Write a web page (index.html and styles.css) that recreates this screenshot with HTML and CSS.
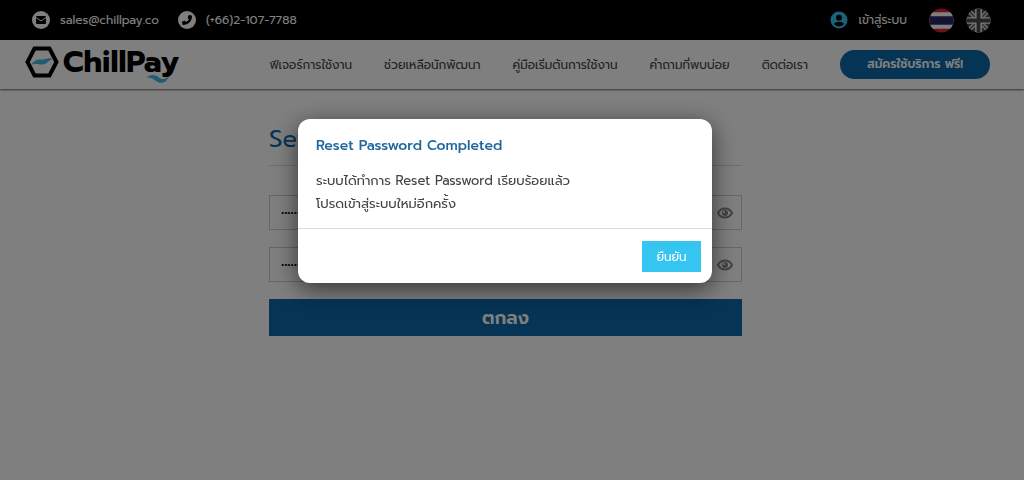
FILE: index.html
```html
<!DOCTYPE html>
<html lang="th">
<head>
    <meta charset="UTF-8">
    <meta name="viewport" content="width=device-width, initial-scale=1.0">
    <title>ChillPay - Reset Password</title>
    <link rel="stylesheet" href="styles.css">
</head>
<body>
    <header>
        <div class="topbar">
            <a class="contact" href="mailto:sales@chillpay.co">
                <svg class="round-icon" viewBox="0 0 18 18" aria-hidden="true">
                    <circle cx="9" cy="9" r="9" fill="#fff"/>
                    <rect x="4" y="5" width="10" height="8" rx="1" fill="#000"/>
                    <path d="M4 6.5 L9 10 L14 6.5" fill="none" stroke="#fff"/>
                </svg>
                sales@chillpay.co
            </a>
            <a class="contact" href="tel:+6621077788">
                <svg class="round-icon" viewBox="0 0 18 18" aria-hidden="true">
                    <circle cx="9" cy="9" r="9" fill="#fff"/>
                    <path d="M11.2 4 L13.5 4.5 Q14 4.6 14 5.2 C14 10 10 14 5.2 14 Q4.6 14 4.5 13.5 L4 11.3 Q3.9 10.8 4.4 10.6 L6.6 9.7 Q7 9.5 7.3 9.9 L8.2 11 Q10.2 10 11 8.2 L9.9 7.3 Q9.5 7 9.7 6.6 L10.6 4.4 Q10.8 3.9 11.2 4 Z" fill="#000"/>
                </svg>
                (+66)2-107-7788
            </a>
            <a class="login" href="#">
                <svg class="user-icon" viewBox="0 0 18 18" aria-hidden="true">
                    <circle cx="9" cy="9" r="8.5" fill="#36c5f0"/>
                    <circle cx="9" cy="6.7" r="2.9" fill="#000"/>
                    <path d="M3.8 13 Q5.5 10.8 9 10.8 Q12.5 10.8 14.2 13 Q12.3 15.4 9 15.4 Q5.7 15.4 3.8 13 Z" fill="#000"/>
                </svg>
                เข้าสู่ระบบ
            </a>
            <a class="flag" href="#" aria-label="ไทย">
                <svg viewBox="0 0 26 26" aria-hidden="true">
                    <clipPath id="flag-th"><circle cx="13" cy="13" r="12.5"/></clipPath>
                    <g clip-path="url(#flag-th)">
                        <path d="M0 0H26V26H0Z" fill="#d92435"/>
                        <path d="M0 4.5H26V21.5H0Z" fill="#fff"/>
                        <path d="M0 8.5H26V17.5H0Z" fill="#27286b"/>
                    </g>
                </svg>
            </a>
            <a class="flag" href="#" aria-label="English">
                <svg viewBox="0 0 26 26" aria-hidden="true">
                    <clipPath id="flag-en"><circle cx="13" cy="13" r="12.5"/></clipPath>
                    <g clip-path="url(#flag-en)">
                        <path d="M0 0H26V26H0Z" fill="#4c4c4c"/>
                        <path d="M0 0L26 26M26 0L0 26" stroke="#d8d8d8" stroke-width="4.5"/>
                        <path d="M0 0L26 26M26 0L0 26" stroke="#606060" stroke-width="1.5"/>
                        <path d="M13 0V26M0 13H26" stroke="#f0f0f0" stroke-width="7"/>
                        <path d="M13 0V26M0 13H26" stroke="#484848" stroke-width="4"/>
                    </g>
                </svg>
            </a>
        </div>
        <nav class="navbar">
            <a class="logo" href="#">
                <svg class="logo-mark" viewBox="0 0 34 32" aria-hidden="true">
                    <path d="M9.5 2.5H24.5L31.5 16L24.5 29.5H9.5L2.5 16Z" fill="none" stroke="#000" stroke-width="4"/>
                    <path d="M6 19C9 14.5 12 13 16 13.5C20 14 21 11.500 28 12.500C24 14 22 18.500 17 18.500C13 18.500 10 17 6 19Z" fill="#43b9e6"/>
                </svg>
                <span class="logo-text">ChillPay</span>
                <svg class="logo-wave" viewBox="0 0 24 10" aria-hidden="true">
                    <path d="M0 3.5C5 0 9 0 13 3.5C16 6 19 5 23 3C20 9 15 10.5 10 7C6 4 4 3.5 0 3.5Z" fill="#43b9e6"/>
                </svg>
            </a>
            <a class="nav-link" href="#">ฟีเจอร์การใช้งาน</a>
            <a class="nav-link" href="#">ช่วยเหลือนักพัฒนา</a>
            <a class="nav-link" href="#">คู่มือเริ่มต้นการใช้งาน</a>
            <a class="nav-link" href="#">คำถามที่พบบ่อย</a>
            <a class="nav-link" href="#">ติดต่อเรา</a>
            <a class="signup" href="#">สมัครใช้บริการ ฟรี!</a>
        </nav>
    </header>

    <main>
        <form class="reset-form">
            <h1>Set</h1>
            <div class="field">
                <input type="password" value="12345678" aria-label="Password">
                <button type="button" class="eye" aria-label="Show password">
                    <svg viewBox="0 0 16 12" aria-hidden="true">
                        <path d="M1 6C4 0 12 0 15 6C12 12 4 12 1 6Z" fill="none" stroke="#888" stroke-width="2"/>
                        <circle cx="8" cy="6" r="3" fill="#888"/>
                        <circle cx="7" cy="5" r="1" fill="#fff"/>
                    </svg>
                </button>
            </div>
            <div class="field">
                <input type="password" value="12345678" aria-label="Confirm password">
                <button type="button" class="eye" aria-label="Show password">
                    <svg viewBox="0 0 16 12" aria-hidden="true">
                        <path d="M1 6C4 0 12 0 15 6C12 12 4 12 1 6Z" fill="none" stroke="#888" stroke-width="2"/>
                        <circle cx="8" cy="6" r="3" fill="#888"/>
                        <circle cx="7" cy="5" r="1" fill="#fff"/>
                    </svg>
                </button>
            </div>
            <button type="submit" class="submit">ตกลง</button>
        </form>
    </main>

    <div class="backdrop">
        <div class="modal" role="dialog" aria-labelledby="modal-title">
            <div class="modal-body">
                <h2 id="modal-title">Reset Password Completed</h2>
                <p>ระบบได้ทำการ Reset Password เรียบร้อยแล้ว<br>โปรดเข้าสู่ระบบใหม่อีกครั้ง</p>
            </div>
            <div class="modal-footer">
                <button type="button" class="confirm">ยืนยัน</button>
            </div>
        </div>
    </div>
</body>
</html>
```
FILE: styles.css
```css
* {
    box-sizing: border-box;
}
body {
    margin: 0;
    background: #fff;
    color: #444;
    font-family: Prompt, Inter, "Noto Sans Thai", "Noto Sans", sans-serif;
    font-size: 12px;
}
a {
    color: inherit;
    text-decoration: none;
}
svg {
    display: block;
}
button,
input {
    font-family: inherit;
}
.topbar {
    display: flex;
    align-items: center;
    height: 40px;
    padding: 0 33px 0 32px;
    background: #000;
    color: #fff;
}
.contact {
    display: flex;
    align-items: center;
    gap: 10px;
    margin-right: 19px;
}
.round-icon {
    width: 18px;
    height: 18px;
}
.login {
    display: flex;
    align-items: center;
    gap: 10px;
    margin-left: auto;
    margin-right: 10px;
}
.user-icon {
    width: 18px;
    height: 18px;
}
.flag {
    margin-left: 12px;
}
.flag svg {
    width: 25px;
    height: 25px;
}
.navbar {
    display: flex;
    align-items: center;
    gap: 32px;
    height: 49px;
    padding: 0 34px 0 25px;
    background: #fff;
    box-shadow: 0 1px 2px rgba(0, 0, 0, 0.6);
}
.logo {
    display: flex;
    align-items: center;
    position: relative;
    gap: 4px;
    margin-right: auto;
    padding-bottom: 6px;
    color: #000;
}
.logo-mark {
    width: 34px;
    height: 32px;
}
.logo-text {
    font-size: 30px;
    line-height: 44px;
    font-weight: 700;
}
.logo-wave {
    position: absolute;
    right: 9px;
    bottom: 6px;
    width: 24px;
    height: 10px;
}
.signup {
    width: 150px;
    border-radius: 15px;
    background: #0b68aa;
    color: #fff;
    font-weight: 600;
    line-height: 29px;
    text-align: center;
}
main {
    padding: 32px 13px 0 0;
}
.reset-form {
    max-width: 473px;
    margin: 0 auto;
}
h1 {
    margin: 0 0 29px;
    padding-bottom: 8px;
    border-bottom: 1px solid #ddd;
    color: #0b68aa;
    font-size: 24px;
    font-weight: 400;
    line-height: 36px;
}
.field {
    display: flex;
    height: 35px;
    margin-bottom: 17px;
    border: 1px solid #ccc;
}
.field input {
    flex: 1;
    min-width: 0;
    padding: 0 11px;
    border: 0;
    background: none;
    color: #000;
    font-size: 12px;
}
.eye {
    width: 32px;
    padding: 0 8px;
    border: 0;
    background: none;
}
.submit {
    width: 100%;
    height: 37px;
    border: 0;
    background: #0b68aa;
    color: #fff;
    font-size: 18px;
    font-weight: 600;
}
.backdrop {
    position: fixed;
    inset: 0;
    display: flex;
    justify-content: center;
    align-items: flex-start;
    padding: 119px 14px 0 0;
    background: rgba(0, 0, 0, 0.5);
}
.modal {
    width: 414px;
    border-radius: 12px;
    background: #fff;
    box-shadow: 0 6px 24px rgba(0, 0, 0, 0.6);
}
.modal-body {
    padding: 17px 18px 13px;
}
h2 {
    margin: 0 0 13px;
    color: #1e689f;
    font-size: 14px;
    font-weight: 500;
    line-height: 20px;
}
.modal p {
    margin: 0;
    font-size: 13px;
    line-height: 23px;
}
.modal-footer {
    display: flex;
    justify-content: flex-end;
    padding: 12px 11px 11px;
    border-top: 1px solid #ddd;
}
.confirm {
    width: 59px;
    height: 31px;
    border: 0;
    background: #36c5f0;
    color: #fff;
    font-size: 12px;
}
```
